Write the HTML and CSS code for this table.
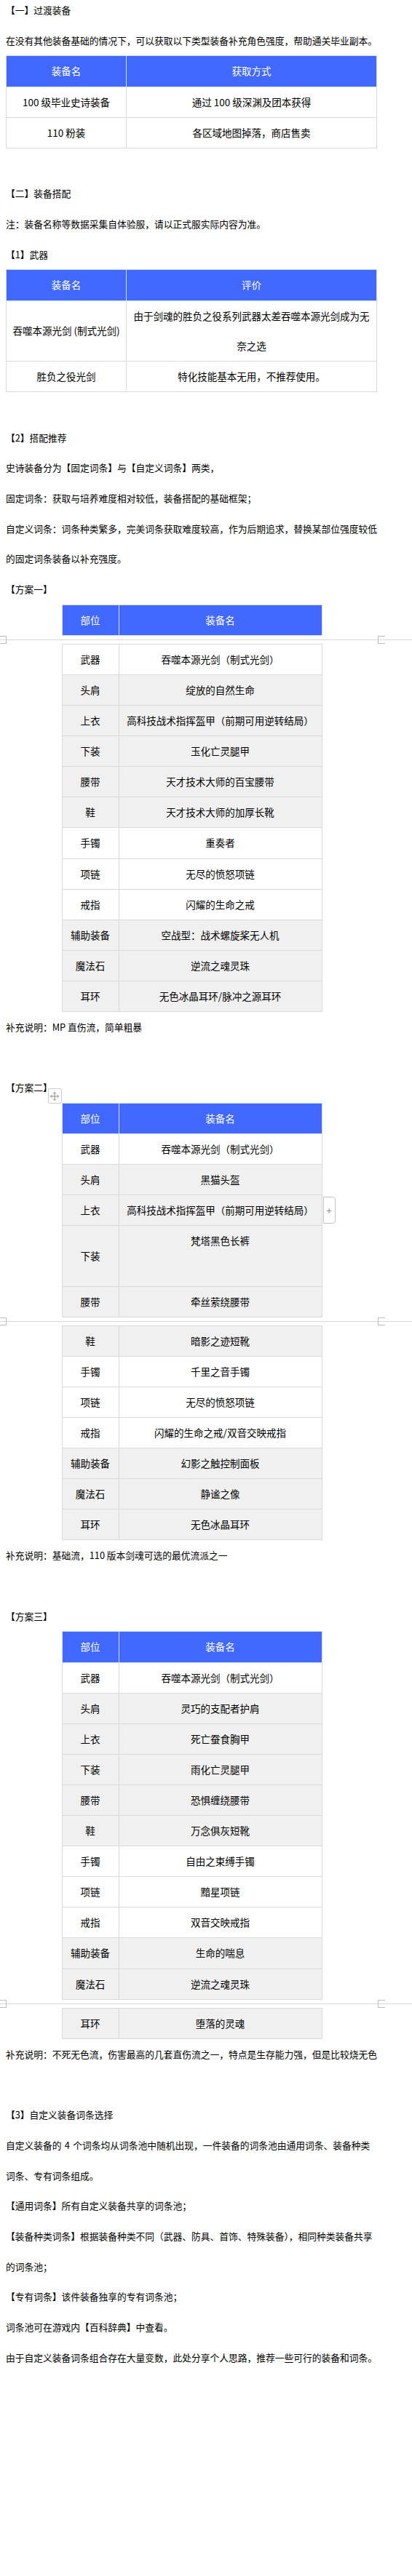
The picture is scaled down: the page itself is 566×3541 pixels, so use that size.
FILE: index.html
```html
<!DOCTYPE html>
<html lang="zh-CN">
<head>
<meta charset="utf-8">
<title>剑魂装备搭配</title>
<link rel="stylesheet" href="styles.css">
</head>
<body>
<div class="doc">
  <p>【一】过渡装备</p>
  <p>在没有其他装备基础的情况下，可以获取以下类型装备补充角色强度，帮助通关毕业副本。</p>
  <table class="tbl wide">
    <colgroup><col class="c1"><col></colgroup>
    <tr><th>装备名</th><th>获取方式</th></tr>
    <tr><td>100 级毕业史诗装备</td><td>通过 100 级深渊及团本获得</td></tr>
    <tr><td>110 粉装</td><td>各区域地图掉落，商店售卖</td></tr>
  </table>

  <p class="gap">【二】装备搭配</p>
  <p>注：装备名称等数据采集自体验服，请以正式服实际内容为准。</p>
  <p>【1】武器</p>
  <table class="tbl wide">
    <colgroup><col class="c1"><col></colgroup>
    <tr><th>装备名</th><th>评价</th></tr>
    <tr><td>吞噬本源光剑 (制式光剑)</td><td>由于剑魂的胜负之役系列武器太差吞噬本源光剑成为无奈之选</td></tr>
    <tr><td>胜负之役光剑</td><td>特化技能基本无用，不推荐使用。</td></tr>
  </table>

  <p class="gap">【2】搭配推荐</p>
  <p>史诗装备分为【固定词条】与【自定义词条】两类，</p>
  <p>固定词条：获取与培养难度相对较低，装备搭配的基础框架；</p>
  <p>自定义词条：词条种类繁多，完美词条获取难度较高，作为后期追求，替换某部位强度较低的固定词条装备以补充强度。</p>
  <p>【方案一】</p>
  <table class="tbl narrow">
    <colgroup><col class="c1n"><col></colgroup>
    <tr><th>部位</th><th>装备名</th></tr>
  </table>
  <div class="pagebreak"><span class="mark left"></span><span class="mark right"></span></div>
  <table class="tbl narrow">
    <colgroup><col class="c1n"><col></colgroup>
    <tr><td>武器</td><td>吞噬本源光剑（制式光剑）</td></tr>
    <tr class="alt"><td>头肩</td><td>绽放的自然生命</td></tr>
    <tr class="alt"><td>上衣</td><td>高科技战术指挥盔甲（前期可用逆转结局）</td></tr>
    <tr class="alt"><td>下装</td><td>玉化亡灵腿甲</td></tr>
    <tr class="alt"><td>腰带</td><td>天才技术大师的百宝腰带</td></tr>
    <tr class="alt"><td>鞋</td><td>天才技术大师的加厚长靴</td></tr>
    <tr><td>手镯</td><td>重奏者</td></tr>
    <tr><td>项链</td><td>无尽的愤怒项链</td></tr>
    <tr><td>戒指</td><td>闪耀的生命之戒</td></tr>
    <tr class="alt"><td>辅助装备</td><td>空战型：战术螺旋桨无人机</td></tr>
    <tr class="alt"><td>魔法石</td><td>逆流之魂灵珠</td></tr>
    <tr class="alt"><td>耳环</td><td>无色冰晶耳环/脉冲之源耳环</td></tr>
  </table>
  <p>补充说明：MP 直伤流，简单粗暴</p>

  <p class="gap">【方案二】</p>
  <div class="tblwrap">
    <span class="movehandle">
      <svg width="14" height="14" viewBox="0 0 14 14" fill="none" stroke="#8c8c8c" stroke-width="1"><path d="M7 1.5v11M1.5 7h11M5 3.5l2-2 2 2M5 10.5l2 2 2-2M3.5 5l-2 2 2 2M10.5 5l2 2-2 2"/></svg>
    </span>
    <table class="tbl narrow">
      <colgroup><col class="c1n"><col></colgroup>
      <tr><th>部位</th><th>装备名</th></tr>
      <tr><td>武器</td><td>吞噬本源光剑（制式光剑）</td></tr>
      <tr class="alt"><td>头肩</td><td>黑猫头盔</td></tr>
      <tr class="alt"><td>上衣</td><td>高科技战术指挥盔甲（前期可用逆转结局）</td></tr>
      <tr class="alt"><td>下装</td><td class="top">梵塔黑色长裤<br>&nbsp;</td></tr>
      <tr class="alt"><td>腰带</td><td>牵丝萦绕腰带</td></tr>
    </table>
    <span class="addrow">+</span>
  </div>
  <div class="pagebreak"><span class="mark left"></span><span class="mark right"></span></div>
  <table class="tbl narrow">
    <colgroup><col class="c1n"><col></colgroup>
    <tr class="alt"><td>鞋</td><td>暗影之迹短靴</td></tr>
    <tr><td>手镯</td><td>千里之音手镯</td></tr>
    <tr><td>项链</td><td>无尽的愤怒项链</td></tr>
    <tr><td>戒指</td><td>闪耀的生命之戒/双音交映戒指</td></tr>
    <tr class="alt"><td>辅助装备</td><td>幻影之触控制面板</td></tr>
    <tr class="alt"><td>魔法石</td><td>静谧之像</td></tr>
    <tr class="alt"><td>耳环</td><td>无色冰晶耳环</td></tr>
  </table>
  <p>补充说明：基础流，110 版本剑魂可选的最优流派之一</p>

  <p class="gap">【方案三】</p>
  <table class="tbl narrow">
    <colgroup><col class="c1n"><col></colgroup>
    <tr><th>部位</th><th>装备名</th></tr>
    <tr><td>武器</td><td>吞噬本源光剑（制式光剑）</td></tr>
    <tr class="alt"><td>头肩</td><td>灵巧的支配者护肩</td></tr>
    <tr class="alt"><td>上衣</td><td>死亡蚕食胸甲</td></tr>
    <tr class="alt"><td>下装</td><td>雨化亡灵腿甲</td></tr>
    <tr class="alt"><td>腰带</td><td>恐惧缠绕腰带</td></tr>
    <tr class="alt"><td>鞋</td><td>万念俱灰短靴</td></tr>
    <tr><td>手镯</td><td>自由之束缚手镯</td></tr>
    <tr><td>项链</td><td>黯星项链</td></tr>
    <tr><td>戒指</td><td>双音交映戒指</td></tr>
    <tr class="alt"><td>辅助装备</td><td>生命的喘息</td></tr>
    <tr class="alt"><td>魔法石</td><td>逆流之魂灵珠</td></tr>
  </table>
  <div class="pagebreak"><span class="mark left"></span><span class="mark right"></span></div>
  <table class="tbl narrow">
    <colgroup><col class="c1n"><col></colgroup>
    <tr class="alt"><td>耳环</td><td>堕落的灵魂</td></tr>
  </table>
  <p>补充说明：不死无色流，伤害最高的几套直伤流之一，特点是生存能力强，但是比较烧无色</p>

  <p class="gap">【3】自定义装备词条选择</p>
  <p class="spaced">自定义装备的 4 个词条均从词条池中随机出现，一件装备的词条池由通用词条、装备种类词条、专有词条组成。</p>
  <p>【通用词条】所有自定义装备共享的词条池；</p>
  <p>【装备种类词条】根据装备种类不同（武器、防具、首饰、特殊装备），相同种类装备共享的词条池；</p>
  <p>【专有词条】该件装备独享的专有词条池；</p>
  <p>词条池可在游戏内【百科辞典】中查看。</p>
  <p>由于自定义装备词条组合存在大量变数，此处分享个人思路，推荐一些可行的装备和词条。</p>
</div>
</body>
</html>
```

FILE: styles.css
```css
html, body {
  margin: 0;
  padding: 0;
  background: #ffffff;
}

body {
  font-family: "Noto Sans CJK SC", "Microsoft YaHei", sans-serif;
  color: #000000;
}

.doc {
  margin-top: -7px;
  padding: 0 47px 0 8px;
}

.doc p {
  margin: 0;
  font-size: 12.75px;
  line-height: 41.7px;
}

.doc p.gap {
  margin-top: 41.7px;
}

.doc p.spaced {
  word-spacing: 1.5px;
}

/* tables */
.tbl {
  border-collapse: collapse;
  table-layout: fixed;
  font-size: 13.5px;
  line-height: 41.1px;
}

.tbl th,
.tbl td {
  border: 1px solid #dadada;
  padding: 0 5px;
  text-align: center;
  vertical-align: middle;
  font-weight: normal;
}

.tbl th {
  background: #4169ff;
  color: #ffffff;
  border-color: #d4dcff;
}

.tbl td.top {
  vertical-align: top;
}

.tbl tr.alt td {
  background: #f0f0f0;
}

.wide {
  width: 510px;
}

.wide .c1 {
  width: 165px;
}

.narrow {
  width: 358px;
  margin: 0 auto;
}

.narrow .c1n {
  width: 78px;
}

/* wrapper for table with editor handles */
.tblwrap {
  position: relative;
  width: 358px;
  margin: 0 auto;
}

.movehandle {
  position: absolute;
  left: -19px;
  top: -20px;
  width: 17px;
  height: 19px;
  border: 1px solid #cfcfcf;
  border-radius: 2px;
  background: #ffffff;
  display: flex;
  align-items: center;
  justify-content: center;
}

.addrow {
  position: absolute;
  left: 359px;
  top: 129px;
  width: 15px;
  height: 35px;
  border: 1px solid #c4c4c4;
  border-radius: 0 4px 4px 0;
  background: #ffffff;
  display: flex;
  align-items: center;
  justify-content: center;
  font-size: 13px;
  line-height: 1;
  color: #8a8a8a;
}

/* editor page separator */
.pagebreak {
  margin: 0 -47px 0 -8px;
  height: 11px;
  display: flex;
  justify-content: space-between;
  background: linear-gradient(#ffffff 5px, #d9d9d9 5px, #d9d9d9 6px, #ffffff 6px);
}

.mark {
  box-sizing: border-box;
  height: 11px;
  border-top: 1px solid #bdbdbd;
  border-bottom: 1px solid #bdbdbd;
}

.mark.left {
  width: 9px;
  border-right: 1px solid #bdbdbd;
}

.mark.right {
  width: 10px;
  margin-right: 37px;
  border-left: 1px solid #bdbdbd;
}
```
